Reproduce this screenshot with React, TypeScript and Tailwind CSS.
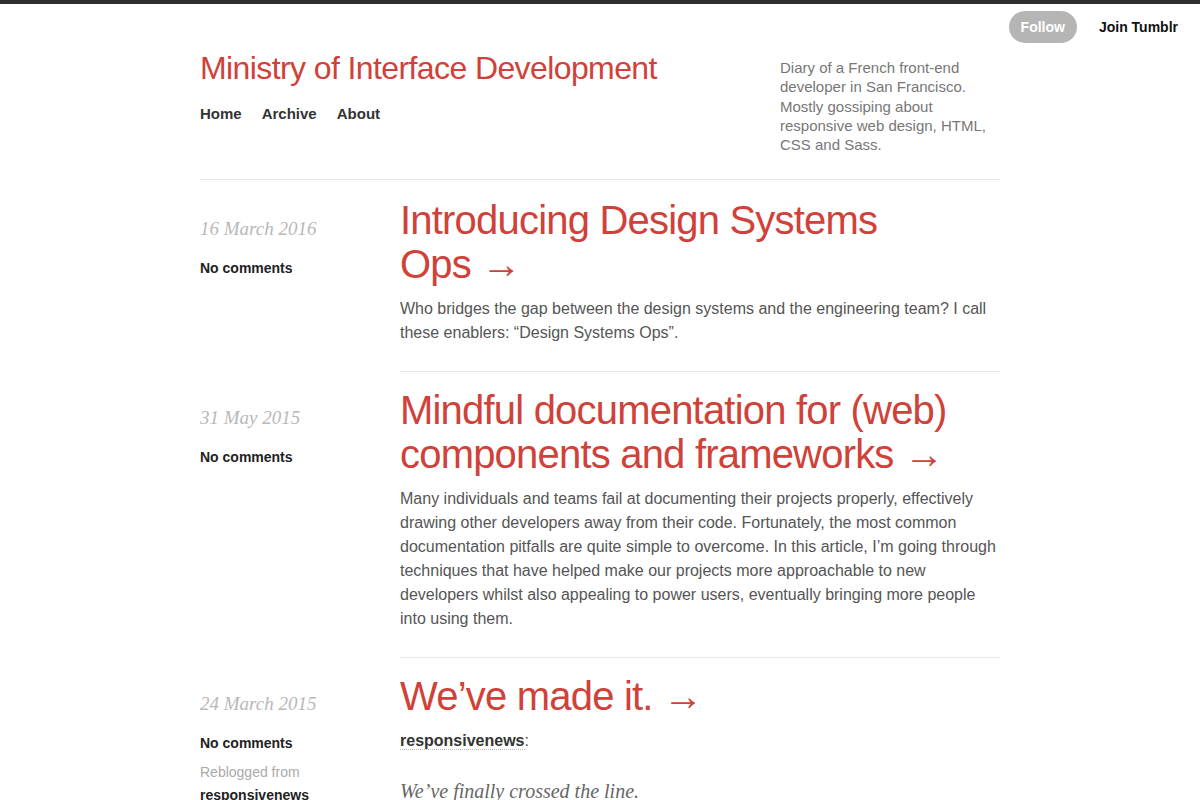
import React from "react";

const sans = "font-['Liberation_Sans',Arial,sans-serif]";
const serif = "font-['Liberation_Serif','Times_New_Roman',serif]";

type Post = {
  date: string;
  title: string;
  body?: string;
  reblog?: boolean;
};

const posts: Post[] = [
  {
    date: "16 March 2016",
    title: "Introducing Design Systems Ops",
    body: "Who bridges the gap between the design systems and the engineering team? I call these enablers: \u201cDesign Systems Ops\u201d.",
  },
  {
    date: "31 May 2015",
    title: "Mindful documentation for (web) components and frameworks",
    body: "Many individuals and teams fail at documenting their projects properly, effectively drawing other developers away from their code. Fortunately, the most common documentation pitfalls are quite simple to overcome. In this article, I\u2019m going through techniques that have helped make our projects more approachable to new developers whilst also appealing to power users, eventually bringing more people into using them.",
  },
  {
    date: "24 March 2015",
    title: "We\u2019ve made it.",
    reblog: true,
  },
];

function PostRow({ post, first }: { post: Post; first: boolean }) {
  return (
    <article className="grid grid-cols-[200px_600px]">
      <aside className={first ? "pt-[37px]" : "pt-[34px]"}>
        <p className={`${serif} text-[19px] leading-6 italic text-[#b8b8b8]`}>{post.date}</p>
        <p className="mt-[15px] text-[14px] leading-6 font-bold text-[#222]">No comments</p>
        {post.reblog && (
          <div className="mt-[6px] text-[14px] leading-[23px]">
            <p className="text-[#aaaaaa]">Reblogged from</p>
            <p className="font-bold text-[#222]">responsivenews</p>
          </div>
        )}
      </aside>
      <div className={`${first ? "pt-[18px]" : "pt-4"} pb-[26px] ${post.reblog ? "" : "border-b border-[#e6e6e6]"}`}>
        <h2 className="text-[40px] leading-[44px] text-[#d0413a] tracking-[-0.8px]">
          {post.title}
          {"\u00a0\u2192"}
        </h2>
        {post.body && (
          <p className="mt-[11px] text-[16px] leading-6 text-[#555555]">{post.body}</p>
        )}
        {post.reblog && (
          <div className="mt-[11px]">
            <p className="text-[16px] leading-6 text-[#555]">
              <span className="font-bold text-[#333] border-b border-dotted border-[#bbb]">responsivenews</span>:
            </p>
            <p className={`${serif} mt-[24px] text-[20px] leading-7 italic text-[#666]`}>
              We{"\u2019"}ve finally crossed the line.
            </p>
          </div>
        )}
      </div>
    </article>
  );
}

export default function App() {
  return (
    <div className={`${sans} relative min-h-[800px] bg-white border-t-4 border-[#2f2f2f]`}>
      <div className="absolute top-[7px] right-[22px] flex items-center gap-[22px]">
        <span className="h-8 px-3 rounded-full bg-[#b5b5b5] text-white text-[14px] font-bold flex items-center">
          Follow
        </span>
        <span className="text-[14px] font-bold text-[#111]">Join Tumblr</span>
      </div>

      <div className="w-[800px] mx-auto">
        <header className="flex justify-between pt-[46px] pb-[25px] border-b border-[#e6e6e6]">
          <div>
            <h1 className="text-[32px] leading-9 text-[#d0413a] tracking-[-0.6px]">
              Ministry of Interface Development
            </h1>
            <nav className="mt-[17px] flex gap-5 text-[15px] font-bold text-[#333]">
              <span>Home</span>
              <span>Archive</span>
              <span>About</span>
            </nav>
          </div>
          <p className="w-[220px] pt-[8px] text-[15px] leading-[19.25px] text-[#777]">
            Diary of a French front-end developer in San Francisco. Mostly gossiping about
            responsive web design, HTML, CSS and Sass.
          </p>
        </header>

        <main>
          {posts.map((p, i) => (
            <PostRow key={p.date} post={p} first={i === 0} />
          ))}
        </main>
      </div>
    </div>
  );
}
